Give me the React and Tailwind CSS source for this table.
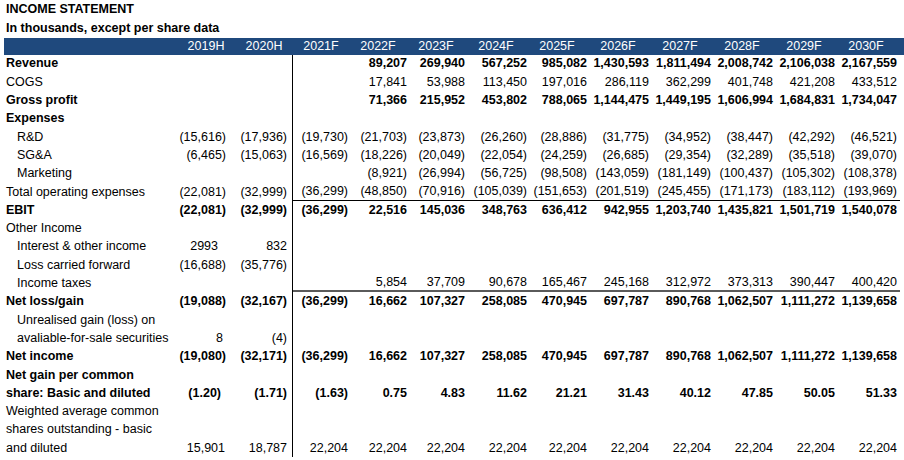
import React from "react";

const cols = ["2019H","2020H","2021F","2022F","2023F","2024F","2025F","2026F","2027F","2028F","2029F","2030F"];

const rows = [
  { l: "Revenue", b: true, v: ["","","","89,207","269,940","567,252","985,082","1,430,593","1,811,494","2,008,742","2,106,038","2,167,559"] },
  { l: "COGS", v: ["","","","17,841","53,988","113,450","197,016","286,119","362,299","401,748","421,208","433,512"] },
  { l: "Gross profit", b: true, v: ["","","","71,366","215,952","453,802","788,065","1,144,475","1,449,195","1,606,994","1,684,831","1,734,047"] },
  { l: "Expenses", b: true },
  { l: "R&D", i: true, v: ["(15,616)","(17,936)","(19,730)","(21,703)","(23,873)","(26,260)","(28,886)","(31,775)","(34,952)","(38,447)","(42,292)","(46,521)"] },
  { l: "SG&A", i: true, v: ["(6,465)","(15,063)","(16,569)","(18,226)","(20,049)","(22,054)","(24,259)","(26,685)","(29,354)","(32,289)","(35,518)","(39,070)"] },
  { l: "Marketing", i: true, v: ["","","","(8,921)","(26,994)","(56,725)","(98,508)","(143,059)","(181,149)","(100,437)","(105,302)","(108,378)"] },
  { l: "Total operating expenses", line: "thin", v: ["(22,081)","(32,999)","(36,299)","(48,850)","(70,916)","(105,039)","(151,653)","(201,519)","(245,455)","(171,173)","(183,112)","(193,969)"] },
  { l: "EBIT", b: true, v: ["(22,081)","(32,999)","(36,299)","22,516","145,036","348,763","636,412","942,955","1,203,740","1,435,821","1,501,719","1,540,078"] },
  { l: "Other Income" },
  { l: "Interest & other income", i: true, v: ["2993","832"], p0: "pr-[17px]" },
  { l: "Loss carried forward", i: true, v: ["(16,688)","(35,776)"] },
  { l: "Income taxes", i: true, line: "thick", v: ["","","","5,854","37,709","90,678","165,467","245,168","312,972","373,313","390,447","400,420"] },
  { l: "Net loss/gain", b: true, v: ["(19,088)","(32,167)","(36,299)","16,662","107,327","258,085","470,945","697,787","890,768","1,062,507","1,111,272","1,139,658"] },
  { l: "Unrealised gain (loss) on", i: true },
  { l: "avaliable-for-sale securities", i: true, v: ["8","(4)"], p0: "pr-[12px]" },
  { l: "Net income", b: true, v: ["(19,080)","(32,171)","(36,299)","16,662","107,327","258,085","470,945","697,787","890,768","1,062,507","1,111,272","1,139,658"] },
  { l: "Net gain per common", b: true },
  { l: "share: Basic and diluted", b: true, v: ["(1.20)","(1.71)","(1.63)","0.75","4.83","11.62","21.21","31.43","40.12","47.85","50.05","51.33"], p0: "pr-[14px]" },
  { l: "Weighted average common" },
  { l: "shares outstanding - basic" },
  { l: "and diluted", v: ["15,901","18,787","22,204","22,204","22,204","22,204","22,204","22,204","22,204","22,204","22,204","22,204"], p0: "pr-[10px]" },
];

const grid = "grid grid-cols-[173px_58px_58px_56px_58px_58px_62px_60px_62px_62px_62px_62px_62px_3px]";
const pads = ["pr-[9px]","pr-[5px]","pr-[1px]","pr-0","pr-0","pr-0","pr-0","pr-0","pr-0","pr-0","pr-0","pr-0"];

function Row({ r }) {
  const v = r.v || [];
  const lineCls = r.line === "thin" ? "border-b border-black" : r.line === "thick" ? "border-b-2 border-[#5a5a5a]" : "";
  return (
    <div className={`${grid} h-[18.3px] ${r.b ? "font-bold" : ""}`}>
      <div className={`flex items-center whitespace-nowrap ${r.i ? "pl-[13px]" : "pl-[2px]"}`}>{r.l}</div>
      {cols.map((c, k) => (
        <div
          key={c}
          className={`flex items-center justify-end whitespace-nowrap ${k === 0 && r.p0 ? r.p0 : pads[k]} ${k === 1 ? "border-r border-black" : ""} ${k >= 2 ? lineCls : ""}`}
        >
          {v[k] || ""}
        </div>
      ))}
      <div className={lineCls}></div>
    </div>
  );
}

export default function App() {
  return (
    <div className="w-[904px] h-[460px] bg-white text-black font-['Liberation_Sans',Arial,sans-serif] text-[12.5px] leading-none pl-[4px] pt-[0.5px]">
      <div className="h-[18.3px] flex items-center pl-[2px] font-bold">INCOME STATEMENT</div>
      <div className="h-[18.3px] flex items-center pl-[2px] font-bold">In thousands, except per share data</div>
      <div className={`${grid} h-[17px] mt-[0.5px] bg-[#1f497d] text-white`}>
        <div></div>
        {cols.map((c) => (
          <div key={c} className="flex items-center justify-center">{c}</div>
        ))}
        <div></div>
      </div>
      {rows.map((r, i) => (
        <Row key={i} r={r} />
      ))}
    </div>
  );
}
